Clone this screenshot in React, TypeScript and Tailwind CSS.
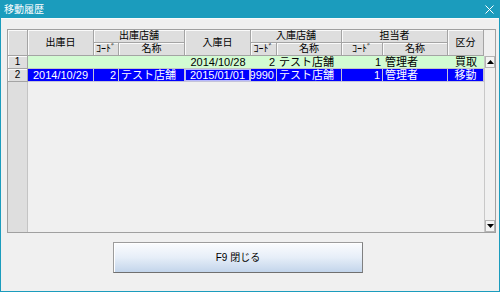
import React from "react";

type Row = {
  no: number;
  outDate: string;
  outCode: string;
  outName: string;
  inDate: string;
  inCode: string;
  inName: string;
  staffCode: string;
  staffName: string;
  kind: string;
  selected?: boolean;
};

const rows: Row[] = [
  {
    no: 1,
    outDate: "",
    outCode: "",
    outName: "",
    inDate: "2014/10/28",
    inCode: "2",
    inName: "テスト店舗",
    staffCode: "1",
    staffName: "管理者",
    kind: "買取",
  },
  {
    no: 2,
    outDate: "2014/10/29",
    outCode: "2",
    outName: "テスト店舗",
    inDate: "2015/01/01",
    inCode: "9990",
    inName: "テスト店舗",
    staffCode: "1",
    staffName: "管理者",
    kind: "移動",
    selected: true,
  },
];

const cols = "grid grid-cols-[20px_66px_25px_66px_66px_26px_65px_41px_65px_36px]";
const hd =
  "flex items-center justify-center bg-[#dedede] border-r border-b border-[#a4a4a4] shadow-[inset_1px_1px_0_#fafafa] text-[10px] leading-none text-black";

const DataRow = ({ r }: { r: Row }) => {
  const base = r.selected
    ? "bg-[#0000ff] text-white border-r border-b border-[#c4c4d8]"
    : "bg-[#d2fbd2] text-black border-b border-[#c4c4c4]";
  const cell = `${base} flex items-center h-[13px] px-[2px] text-[11px] leading-none whitespace-nowrap overflow-hidden`;
  return (
    <div className={`${cols} h-[13px]`}>
      <div className={`${hd} text-[10px]`}>{r.no}</div>
      <div className={`${cell} justify-center`}>{r.outDate}</div>
      <div className={`${cell} justify-end`}>{r.outCode}</div>
      <div className={`${cell} justify-start`}>{r.outName}</div>
      <div
        className={`${cell} justify-center ${r.selected ? "shadow-[inset_0_0_0_1px_#b8b8ff]" : ""}`}
      >
        {r.inDate}
      </div>
      <div className={`${cell} justify-end`}>{r.inCode}</div>
      <div className={`${cell} justify-start`}>{r.inName}</div>
      <div className={`${cell} justify-end`}>{r.staffCode}</div>
      <div className={`${cell} justify-start`}>{r.staffName}</div>
      <div className={`${cell} justify-center`}>{r.kind}</div>
    </div>
  );
};

const ArrowBox = ({ up }: { up?: boolean }) => (
  <div className="h-[12px] flex items-center justify-center bg-[#f4f4f4] border border-[#b4b4b4]">
    <svg width="7" height="4" viewBox="0 0 7 4">
      {up ? <polygon points="0,4 7,4 3.5,0" fill="#000" /> : <polygon points="0,0 7,0 3.5,4" fill="#000" />}
    </svg>
  </div>
);

export default function App() {
  return (
    <div className="w-[500px] h-[292px] flex flex-col bg-[#1b9cbd] font-['Liberation_Sans_Narrow','Liberation_Sans','Noto_Sans_CJK_JP',sans-serif] overflow-hidden">
      <div className="h-[18px] flex items-center justify-between pl-[4px] pr-[6px] text-white">
        <span className="text-[10px] leading-none font-['Noto_Sans_CJK_JP',sans-serif]">移動履歴</span>
        <svg width="9" height="9" viewBox="0 0 9 9">
          <path d="M0.5 0.5 L8.5 8.5 M8.5 0.5 L0.5 8.5" stroke="#fff" strokeWidth="1" />
        </svg>
      </div>
      <div className="flex-1 mx-[1px] mb-[1px] bg-[#f0f0f0] border-t border-[#fafafa] flex flex-col">
        <div className="ml-[6px] mt-[10px] w-[489px] h-[204px] border border-[#a0a0a0] flex">
          <div className="w-[476px] flex flex-col">
            <div className={`${cols} grid-rows-[13px_13px]`}>
              <div className={`${hd} row-span-2`}></div>
              <div className={`${hd} row-span-2`}>出庫日</div>
              <div className={`${hd} col-span-2`}>出庫店舗</div>
              <div className={`${hd} row-span-2`}>入庫日</div>
              <div className={`${hd} col-span-2`}>入庫店舗</div>
              <div className={`${hd} col-span-2`}>担当者</div>
              <div className={`${hd} row-span-2`}>区分</div>
              <div className={hd}>ｺｰﾄﾞ</div>
              <div className={hd}>名称</div>
              <div className={hd}>ｺｰﾄﾞ</div>
              <div className={hd}>名称</div>
              <div className={hd}>ｺｰﾄﾞ</div>
              <div className={hd}>名称</div>
            </div>
            {rows.map((r) => (
              <DataRow key={r.no} r={r} />
            ))}
            <div className="flex-1 flex">
              <div className="w-[20px] bg-[#dedede] border-r border-[#c4c4c4]"></div>
              <div className="flex-1 bg-[#f0f0f0]"></div>
            </div>
          </div>
          <div className="flex-1 flex flex-col">
            <div className="h-[26px]"></div>
            <div className="flex-1 flex flex-col bg-[#f0f0f0] border-l border-[#c8c8c8]">
              <ArrowBox up />
              <div className="flex-1"></div>
              <ArrowBox />
            </div>
          </div>
        </div>
        <div className="ml-[112px] mt-[9px] w-[250px] h-[31px] flex items-center justify-center border border-[#9c9c9c] border-b-[#707070] border-r-[#808080] bg-gradient-to-b from-[#fbfcfe] via-[#e6eef8] to-[#c3d5eb] shadow-[inset_1px_1px_0_#ffffff] text-[10px] text-black font-['Liberation_Sans','Noto_Sans_CJK_JP',sans-serif]">
          F9 閉じる
        </div>
      </div>
    </div>
  );
}
